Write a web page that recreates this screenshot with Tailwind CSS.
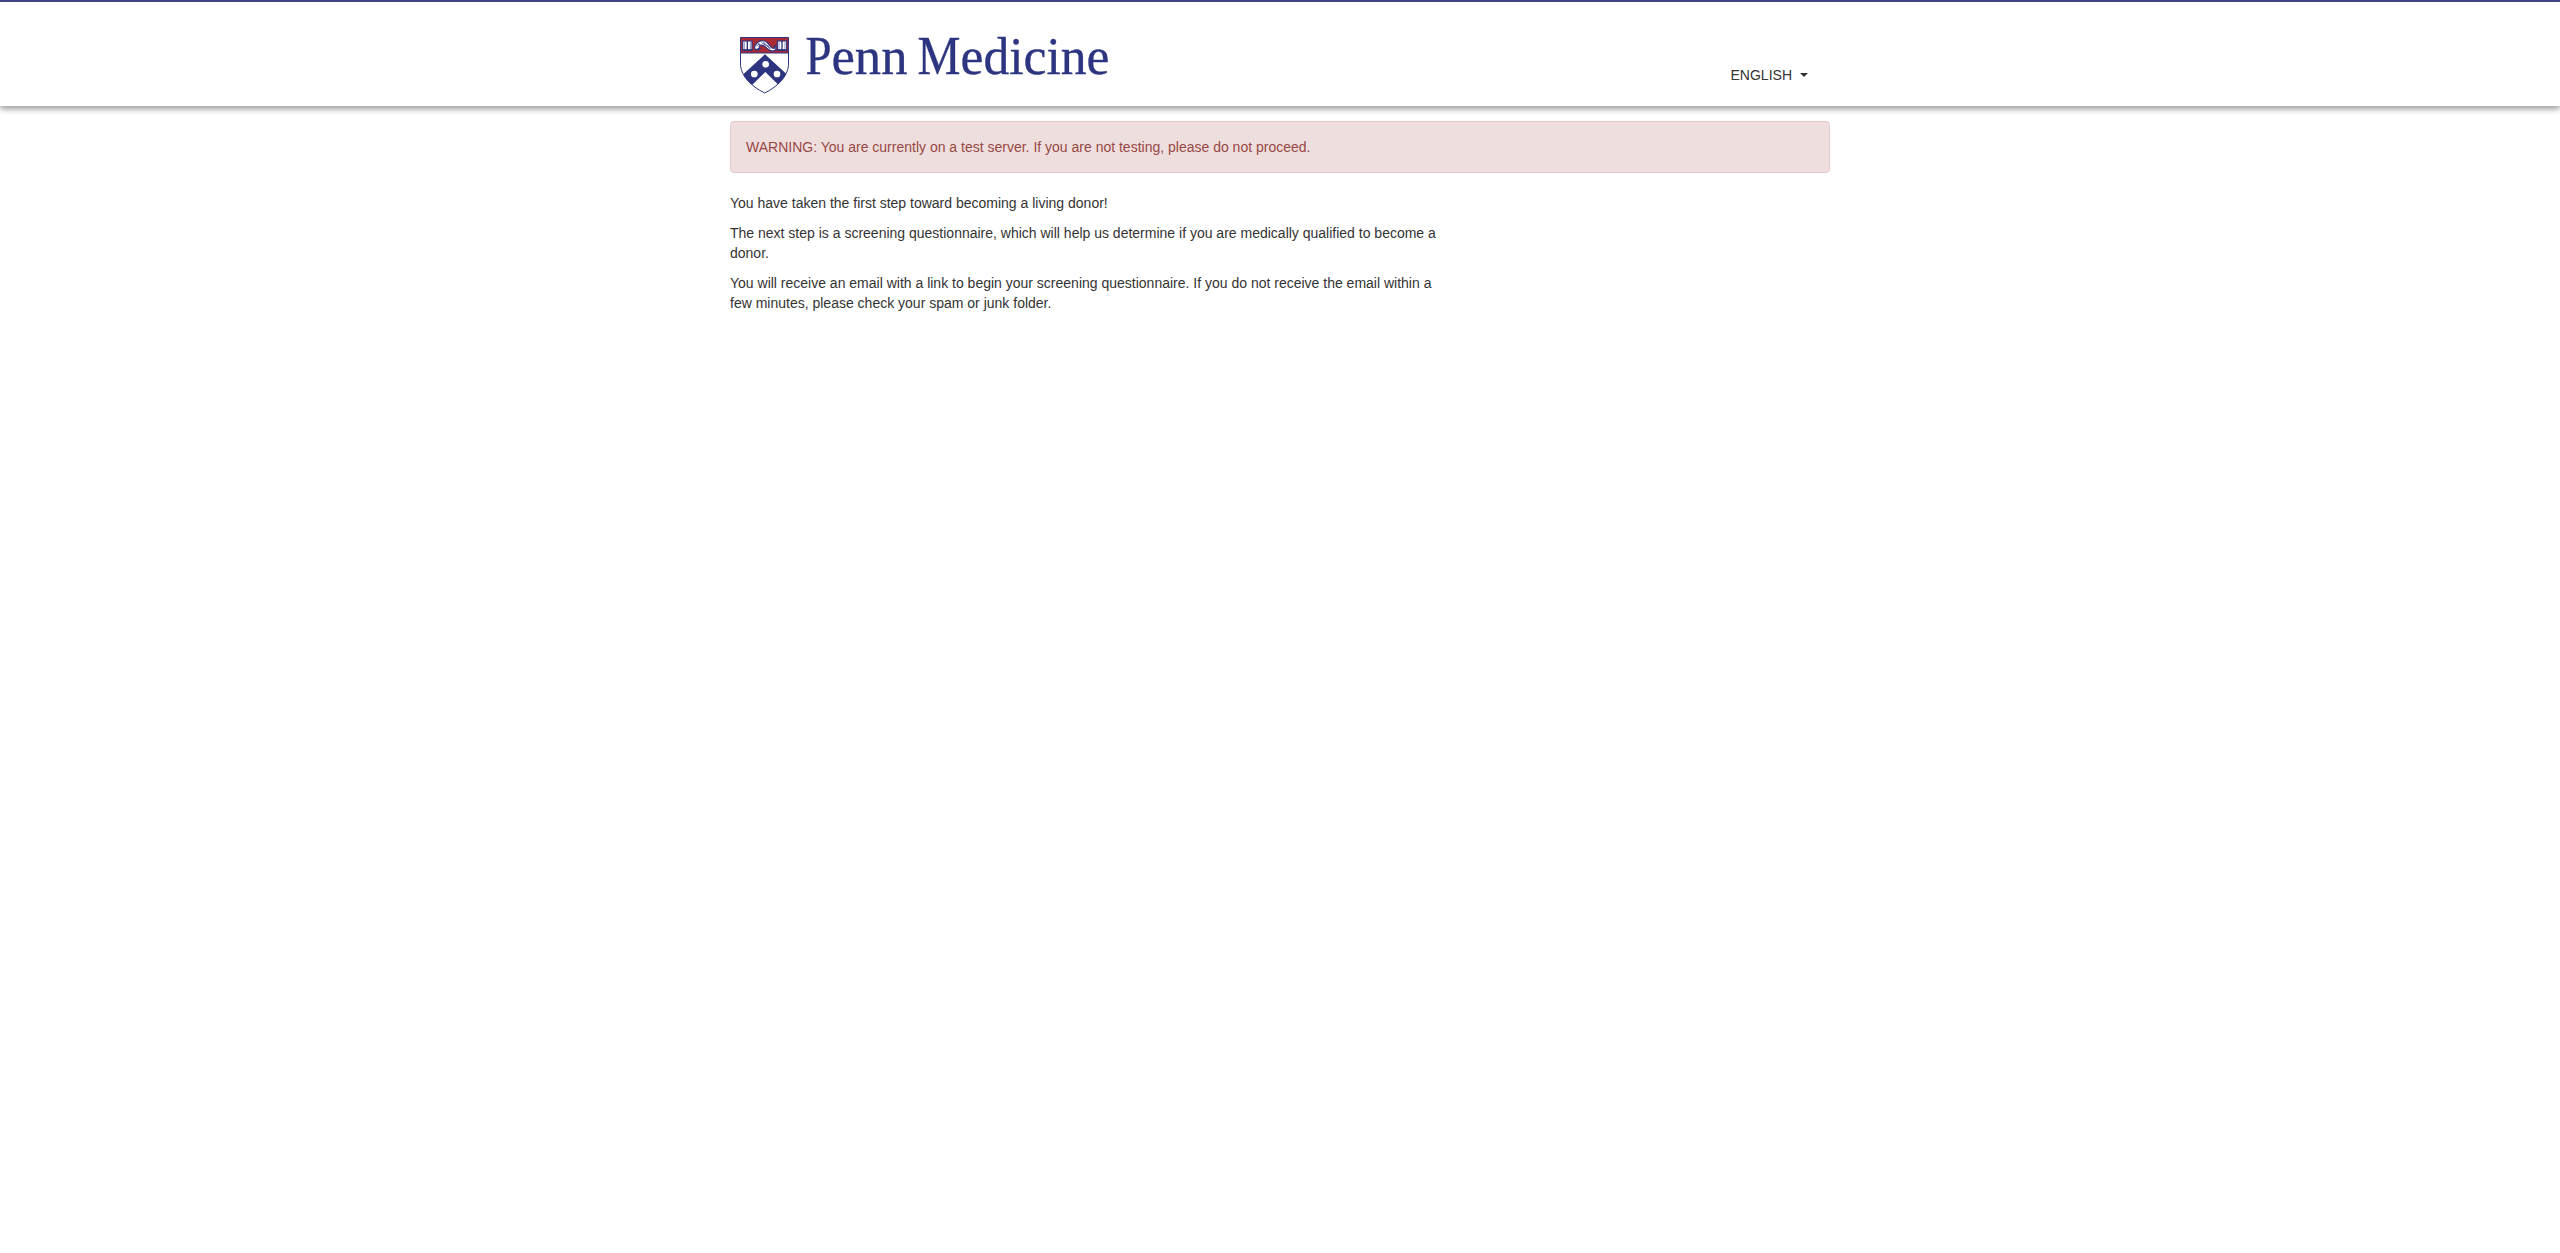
<!DOCTYPE html>
<html lang="en">
<head>
<meta charset="utf-8">
<title>Penn Medicine</title>
<script src="https://cdn.jsdelivr.net/npm/@tailwindcss/browser@4"></script>
</head>
<body class="min-h-screen bg-white font-['Liberation_Sans',Arial,sans-serif] text-sm leading-5 text-[#333]">
<header class="h-[106px] border-t-2 border-[#3d4384] bg-white shadow-[0_3px_6px_rgba(0,0,0,0.4)]">
  <div class="mx-auto flex h-full w-[1100px] items-start justify-between">
    <svg class="mt-2 h-[94px] w-[400px]" viewBox="0 -18 400 94" role="img" aria-label="Penn Medicine">
      <g transform="scale(.33333)">
        <defs><clipPath id="shield"><path d="M31.5 28H175.5V113C172 145 146 174 104 195C62 174 35 145 31.5 113Z"/></clipPath></defs>
        <g clip-path="url(#shield)">
          <path d="M30 26H182V75H30Z" fill="#a92a33"/>
          <path d="M105 79L176 144L145 170L106 132L67 170L34 144Z" fill="#2d3480"/>
        </g>
        <g fill="#fff"><circle cx="107" cy="109" r="10"/><circle cx="73" cy="138" r="10"/><circle cx="141" cy="138" r="10"/></g>
        <g stroke="#2d3480" stroke-width="3.5" fill="#fff">
          <path d="M38 39H50L52 41L54 39H66V66H54L52 68L50 66H38Z"/>
          <path d="M142 39H154L156 41L158 39H170V66H158L156 68L154 66H142Z"/>
          <path d="M36 66H68M140 66H172M52 40V67M156 40V67" fill="none" stroke-width="4"/>
          <path d="M43 41V64M61 41V64M147 41V64M165 41V64" fill="none" stroke-width="1.6"/>
          <path d="M77 66C72 59 74 50 82 44C92 36 105 36 113 45C119 52 122 60 130 61C136 62 135 55 132 52L138 56C139 67 132 71 123 68C112 65 106 54 98 52C88 50 85 57 90 61L84 62L86 66L79 64Z"/>
          <path d="M79 54L88 48M85 46L91 51M95 44L109 53M100 42L117 59M112 52L121 63" fill="none" stroke-width="2.5"/>
        </g>
        <path d="M31.5 28.5H175.5V113C172 145 146 174 104 195C62 174 35 145 31.5 113ZM32 75H175" fill="none" stroke="#2d3480" stroke-width="3"/>
      </g>
      <g class="font-['Liberation_Serif',serif]" fill="#2d3480" stroke="#2d3480" stroke-width=".35" font-size="53">
        <text y="46" x="75.5"><tspan font-size="55" textLength="26" lengthAdjust="spacingAndGlyphs">P</tspan><tspan textLength="76" lengthAdjust="spacingAndGlyphs">enn</tspan></text>
        <text y="46" x="187.5"><tspan font-size="55" textLength="43" lengthAdjust="spacingAndGlyphs">M</tspan><tspan textLength="149" lengthAdjust="spacingAndGlyphs">edicine</tspan></text>
      </g>
    </svg>
    <button class="mt-[63px] mr-[22px] flex h-5 items-center gap-2 text-[#333]">ENGLISH
      <span class="h-0 w-0 border-x-4 border-t-4 border-x-transparent border-t-[#333]"></span>
    </button>
  </div>
</header>
<main class="mx-auto w-[1100px] pt-[15px]">
  <div class="mb-5 rounded border border-[#e4c9cd] bg-[#eedede] p-[15px] text-[#984844]" role="alert">WARNING: You are currently on a test server. If you are not testing, please do not proceed.</div>
  <div class="flex w-[718px] flex-col gap-2.5">
    <p>You have taken the first step toward becoming a living donor!</p>
    <p>The next step is a screening questionnaire, which will help us determine if you are medically qualified to become a donor.</p>
    <p>You will receive an email with a link to begin your screening questionnaire. If you do not receive the email within a few minutes, please check your spam or junk folder.</p>
  </div>
</main>
</body>
</html>
